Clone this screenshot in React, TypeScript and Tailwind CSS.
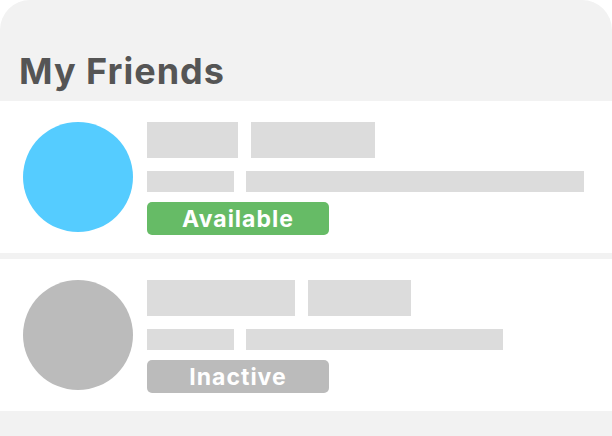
export default function App() {
  const friends = [
    {
      id: 1,
      avatar: "bg-[#55ccff]",
      status: "Available",
      statusColor: "bg-[#66bb66]",
      top: ["w-[91px]", "w-[124px]"],
      bottom: "w-[338px]",
    },
    {
      id: 2,
      avatar: "bg-[#bbbbbb]",
      status: "Inactive",
      statusColor: "bg-[#bbbbbb]",
      top: ["w-[148px]", "w-[103px]"],
      bottom: "w-[257px]",
    },
  ];

  return (
    <div className="h-[436px] w-[612px] overflow-hidden rounded-t-[30px] bg-[#f2f2f2] font-['Inter',sans-serif]">
      <div className="flex h-[101px] items-end px-[19px] pb-[12px]">
        <h1 className="text-[36px] font-bold leading-none tracking-[1px] text-[#555555]">
          My Friends
        </h1>
      </div>
      <div className="flex flex-col gap-[6px]">
        {friends.map((friend) => (
          <div
            key={friend.id}
            className="flex h-[152px] items-start gap-[14px] bg-white pl-[23px] pt-[21px]"
          >
            <div className={`h-[110px] w-[110px] shrink-0 rounded-full ${friend.avatar}`} />
            <div className="flex flex-col">
              <div className="flex gap-[13px]">
                <div className={`h-[36px] bg-[#dcdcdc] ${friend.top[0]}`} />
                <div className={`h-[36px] bg-[#dcdcdc] ${friend.top[1]}`} />
              </div>
              <div className="mt-[13px] flex gap-[12px]">
                <div className="h-[21px] w-[87px] bg-[#dcdcdc]" />
                <div className={`h-[21px] bg-[#dcdcdc] ${friend.bottom}`} />
              </div>
              <div
                className={`mt-[10px] flex h-[33px] w-[182px] items-center justify-center rounded-[5px] pt-[2px] text-[23px] font-bold leading-none tracking-[1px] text-white ${friend.statusColor}`}
              >
                {friend.status}
              </div>
            </div>
          </div>
        ))}
      </div>
    </div>
  );
}
